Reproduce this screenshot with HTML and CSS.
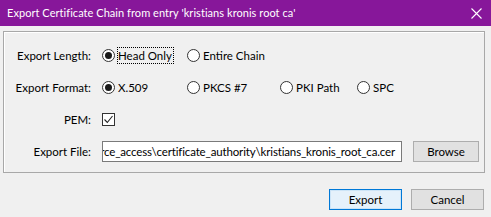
FILE: index.html
```html
<!DOCTYPE html>
<html lang="en">
<head>
    <meta charset="UTF-8">
    <title>Export Certificate Chain</title>
    <link rel="stylesheet" href="styles.css">
</head>
<body>
    <div class="window">
        <div class="titlebar">
            <span class="title">Export Certificate Chain from entry 'kristians kronis root ca'</span>
            <svg class="close" width="11" height="11" viewBox="0 0 11 11">
                <path d="M0.5 0.5 L10.5 10.5 M10.5 0.5 L0.5 10.5" stroke="#fff" stroke-width="1.1" fill="none"/>
            </svg>
        </div>

        <div class="panel">
            <div class="label">Export Length:</div>
            <div class="options">
                <label class="radio checked"><span class="dot"></span><span class="focus">Head Only</span></label>
                <label class="radio"><span class="dot"></span>Entire Chain</label>
            </div>

            <div class="label">Export Format:</div>
            <div class="options">
                <label class="radio checked"><span class="dot"></span>X.509</label>
                <label class="radio w-pkcs"><span class="dot"></span>PKCS #7</label>
                <label class="radio w-pki"><span class="dot"></span>PKI Path</label>
                <label class="radio"><span class="dot"></span>SPC</label>
            </div>

            <div class="label">PEM:</div>
            <div class="options">
                <span class="check">
                    <svg width="11" height="11" viewBox="0 0 11 11">
                        <path d="M1.5 5.5 L4.3 8.5 L9.5 2" stroke="#222" stroke-width="1.1" fill="none"/>
                    </svg>
                </span>
            </div>

            <div class="label">Export File:</div>
            <div class="file-row">
                <div class="field"><span>rce_access\certificate_authority\kristians_kronis_root_ca.cer</span></div>
                <button class="btn browse">Browse</button>
            </div>
        </div>

        <div class="actions">
            <button class="btn default">Export</button>
            <button class="btn">Cancel</button>
        </div>
    </div>
</body>
</html>
```

FILE: styles.css
```css
body {
    margin: 0;
    padding: 0;
    background: #f0f0f0;
    font-family: 'Lato', 'Noto Sans', sans-serif;
    font-size: 11.5px;
    color: #000;
}

.window {
    width: 491px;
    height: 217px;
    background: #f0f0f0;
    overflow: hidden;
}

.titlebar {
    height: 26px;
    background: #87179a;
    color: #fff;
    display: flex;
    align-items: center;
    justify-content: space-between;
    padding: 0 9px 1px 7px;
    box-sizing: border-box;
}

.title {
    font-size: 11px;
    letter-spacing: 0.05px;
}

.close {
    margin-top: 1px;
}

.panel {
    margin: 5px 6px 0 3px;
    border: 1px solid #a8a8a8;
    box-shadow: inset 1px 1px 0 #fff;
    display: grid;
    grid-template-columns: 87px 1fr;
    grid-template-rows: 22px 22px 22px 22px;
    row-gap: 10px;
    column-gap: 11px;
    padding: 12px 0 10px 0;
}

.label {
    display: flex;
    align-items: center;
    justify-content: flex-end;
}

.options {
    display: flex;
    align-items: center;
}

.radio {
    display: flex;
    align-items: center;
    width: 85px;
    white-space: nowrap;
}

.radio.w-pkcs {
    width: 93px;
}

.radio.w-pki {
    width: 77px;
}

.dot {
    width: 13px;
    height: 13px;
    box-sizing: border-box;
    border: 1px solid #333;
    border-radius: 50%;
    background: #fff;
    margin-right: 3px;
    position: relative;
    flex-shrink: 0;
}

.radio.checked .dot::after {
    content: "";
    position: absolute;
    left: 2px;
    top: 2px;
    width: 7px;
    height: 7px;
    border-radius: 50%;
    background: #1a1a1a;
}

.focus {
    outline: 1px dotted #000;
    padding: 0 1px 0 0;
    line-height: 15px;
}

.check {
    width: 13px;
    height: 13px;
    box-sizing: border-box;
    border: 1px solid #333;
    background: #fff;
    display: flex;
    align-items: center;
    justify-content: center;
}

.file-row {
    display: flex;
    align-items: center;
    gap: 11px;
}

.field {
    width: 300px;
    height: 21px;
    box-sizing: border-box;
    border: 1px solid #7a7a7a;
    background: #fff;
    overflow: hidden;
    display: flex;
    align-items: center;
    justify-content: flex-end;
    padding-right: 6px;
    white-space: nowrap;
    letter-spacing: -0.15px;
}

.btn {
    font-family: 'Lato', 'Noto Sans', sans-serif;
    font-size: 11.5px;
    width: 66px;
    height: 21px;
    box-sizing: border-box;
    background: #e1e1e1;
    border: 1px solid #adadad;
    padding: 0;
    color: #000;
}

.actions {
    display: flex;
    justify-content: flex-end;
    gap: 9px;
    margin: 16px 7px 0 0;
}

.actions .btn {
    width: 73px;
}

.btn.default {
    border: 1px solid #0078d7;
    background: #e5f1fb;
    box-shadow: inset 0 0 0 1px #cce4f7;
}
```
